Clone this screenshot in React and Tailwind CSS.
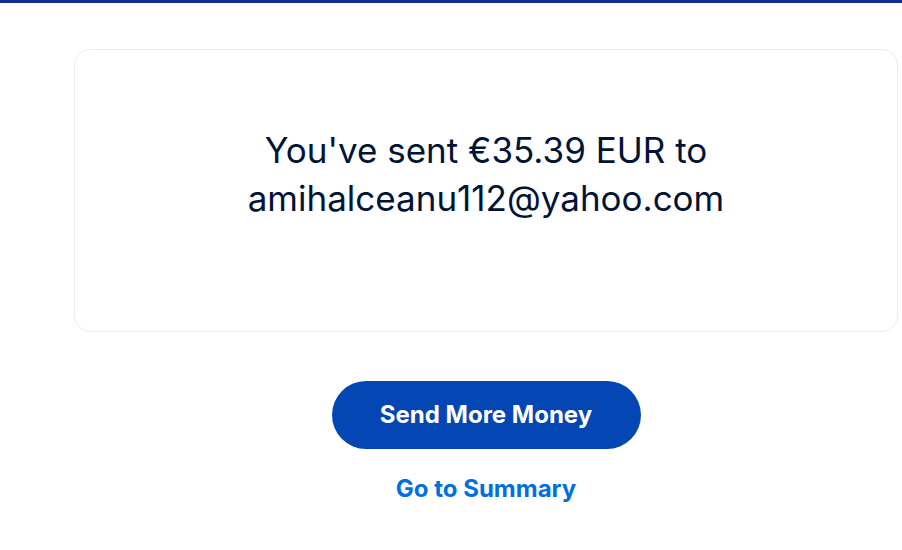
export default function App() {
  return (
    <div className="min-h-[550px] w-[902px] bg-white" style={{ fontFamily: 'Inter, "Liberation Sans", sans-serif' }}>
      <div className="h-[3px] bg-[#142c8e]" />
      <div className="pt-[46px] pl-[74px] pr-[4px]">
        <div className="w-[824px] rounded-[16px] border border-[#ececec] pt-[76px] pb-[109px] text-center">
          <p className="text-[35px] leading-[48px] text-[#001435] font-normal">
            You've sent €35.39 EUR to
            <br />
            amihalceanu112@yahoo.com
          </p>
        </div>
        <div className="flex w-[824px] flex-col items-center pt-[49px]">
          <button className="h-[68px] w-[309px] rounded-full bg-[#0546b5] text-[24px] font-bold text-white">
            Send More Money
          </button>
          <a className="mt-[24px] text-[24px] font-bold leading-[32px] text-[#0070e0]">Go to Summary</a>
        </div>
      </div>
    </div>
  );
}
